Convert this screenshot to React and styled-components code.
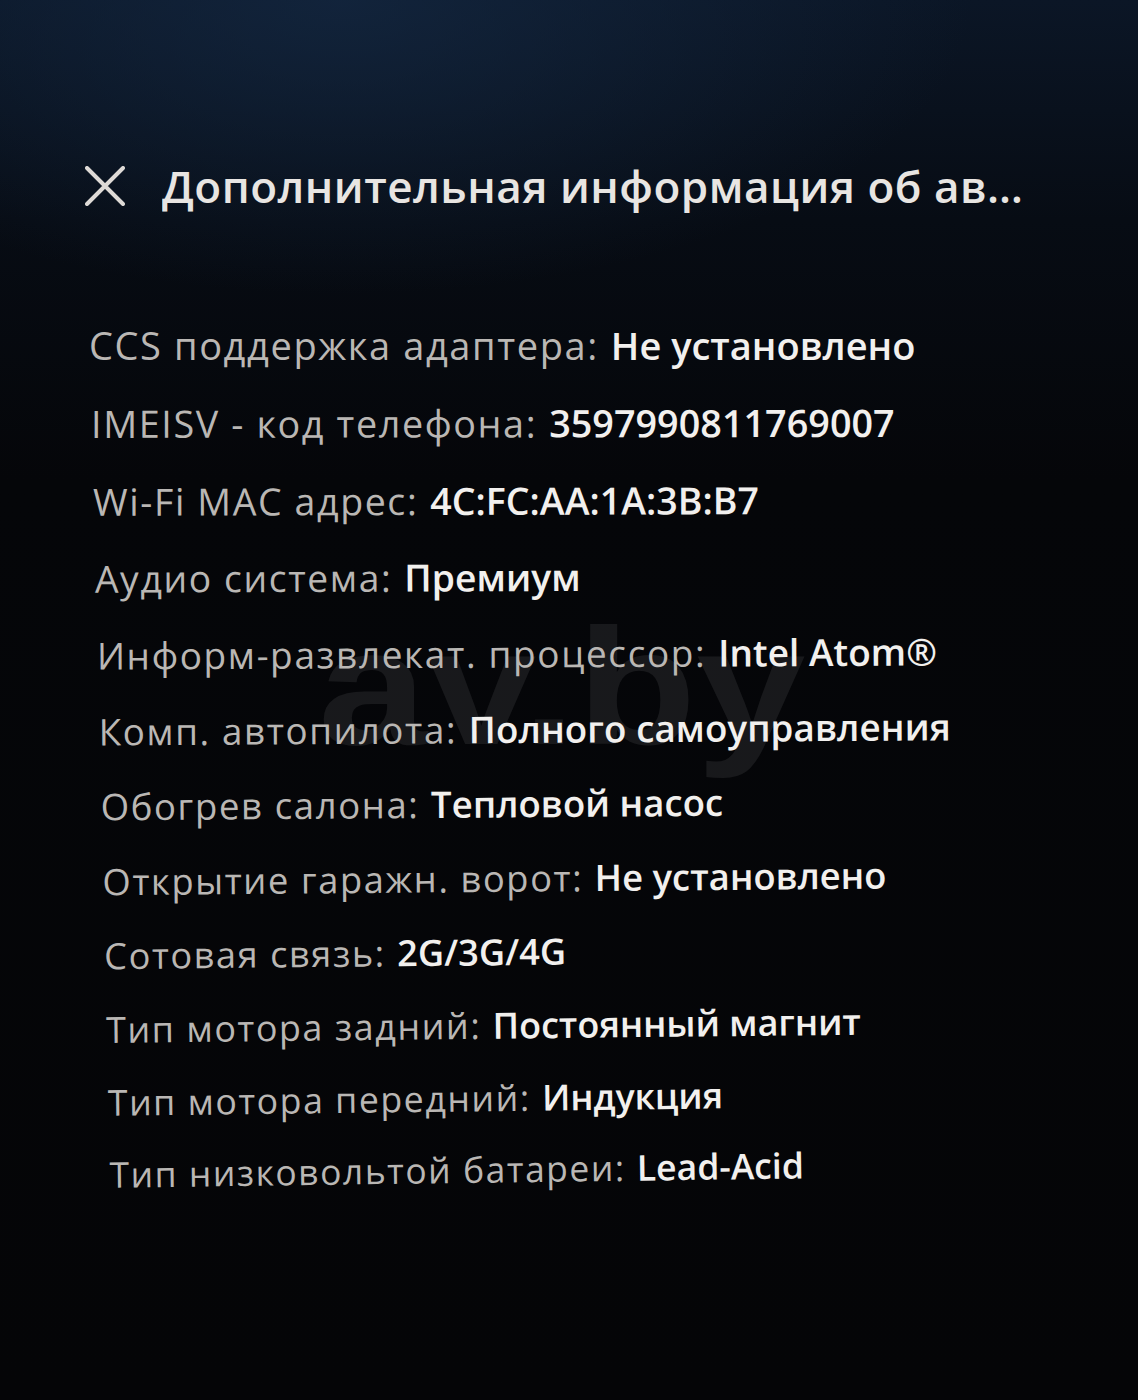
import styled, { createGlobalStyle } from "styled-components";

const GlobalStyle = createGlobalStyle`
  html, body {
    margin: 0;
    padding: 0;
    background: #050608;
  }
  * { box-sizing: border-box; }
`;

const rows = [
  { label: "CCS поддержка адаптера:", value: "Не установлено" },
  { label: "IMEISV - код телефона:", value: "3597990811769007" },
  { label: "Wi-Fi MAC адрес:", value: "4C:FC:AA:1A:3B:B7" },
  { label: "Аудио система:", value: "Премиум" },
  { label: "Информ-развлекат. процессор:", value: "Intel Atom®" },
  { label: "Комп. автопилота:", value: "Полного самоуправления" },
  { label: "Обогрев салона:", value: "Тепловой насос" },
  { label: "Открытие гаражн. ворот:", value: "Не установлено" },
  { label: "Сотовая связь:", value: "2G/3G/4G" },
  { label: "Тип мотора задний:", value: "Постоянный магнит" },
  { label: "Тип мотора передний:", value: "Индукция" },
  { label: "Тип низковольтой батареи:", value: "Lead-Acid" },
];

const Screen = styled.div`
  position: relative;
  width: 1138px;
  height: 1400px;
  overflow: hidden;
  font-family: "Open Sans", "Noto Sans", sans-serif;
  background:
    radial-gradient(ellipse 900px 420px at 30% 0%, rgba(20, 40, 66, 0.75), rgba(10, 20, 34, 0) 70%),
    linear-gradient(180deg, #0b1626 0px, #070c14 220px, #050609 480px, #050507 100%);
  padding: 158px 0 0 84px;
`;

const Header = styled.div`
  display: flex;
  align-items: center;
  gap: 36px;
`;

const CloseButton = styled.button`
  display: flex;
  align-items: center;
  justify-content: center;
  width: 42px;
  height: 44px;
  padding: 0;
  border: none;
  background: none;
  color: #dedad6;
  cursor: pointer;
`;

const Title = styled.h1`
  margin: 0;
  max-width: 878px;
  font-size: 44px;
  line-height: 56px;
  font-weight: 600;
  letter-spacing: 0.5px;
  color: #e8e5e2;
  white-space: nowrap;
  overflow: hidden;
  text-overflow: ellipsis;
`;

const List = styled.div`
  position: relative;
  z-index: 1;
  display: flex;
  flex-direction: column;
  margin-top: 112px;
  padding-left: 5px;
`;

const Row = styled.div`
  display: flex;
  align-items: baseline;
  gap: 12px;
  margin-top: ${(p) => p.$offset}px;
  padding-left: ${(p) => p.$shift}px;
  transform: rotate(${(p) => p.$tilt}deg) scale(${(p) => p.$scale});
  transform-origin: left center;
  font-size: 38px;
  line-height: 38px;
  white-space: nowrap;
`;

const Label = styled.span`
  color: #bab7b4;
  font-weight: 400;
  letter-spacing: 1.6px;
`;

const Value = styled.span`
  color: #f2f0ee;
  font-weight: 600;
`;

const Watermark = styled.div`
  position: absolute;
  left: 318px;
  top: 605px;
  font-family: "Liberation Sans", Arial, sans-serif;
  font-size: 165px;
  line-height: 1;
  font-weight: 700;
  transform: scaleX(1.19);
  transform-origin: left top;
  color: rgba(255, 255, 255, 0.08);
  pointer-events: none;
`;

function CloseIcon() {
  return (
    <svg width="40" height="40" viewBox="0 0 40 40" fill="none">
      <path d="M2 2 L38 38 M38 2 L2 38" stroke="currentColor" strokeWidth="4" strokeLinecap="round" />
    </svg>
  );
}

export default function App() {
  return (
    <>
      <GlobalStyle />
      <Screen>
        <Header>
          <CloseButton aria-label="Закрыть">
            <CloseIcon />
          </CloseButton>
          <Title>Дополнительная информация об автомобиле</Title>
        </Header>

        <List>
          {rows.map((row, i) => (
            <Row
              key={row.label}
              $offset={i === 0 ? 0 : 41 - i * 0.6}
              $shift={i * 2}
              $tilt={-i * 0.07}
              $scale={1 - i * 0.006}
            >
              <Label>{row.label}</Label>
              <Value>{row.value}</Value>
            </Row>
          ))}
        </List>

        <Watermark>av.by</Watermark>
      </Screen>
    </>
  );
}
